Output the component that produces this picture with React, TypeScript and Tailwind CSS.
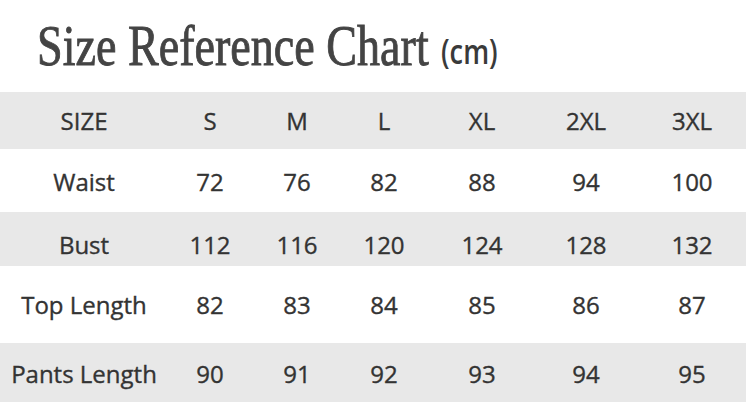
import React from 'react';

const sizes = ['S', 'M', 'L', 'XL', '2XL', '3XL'];

type Row = {
  label: string;
  values: (string | number)[];
  bg: string;
  height: string;
  shift: string;
};

const rows: Row[] = [
  { label: 'SIZE', values: sizes, bg: 'bg-[#e8e8e8]', height: 'h-[57px]', shift: 'pt-0' },
  { label: 'Waist', values: [72, 76, 82, 88, 94, 100], bg: 'bg-white', height: 'h-[63px]', shift: 'pt-[3px]' },
  { label: 'Bust', values: [112, 116, 120, 124, 128, 132], bg: 'bg-[#e8e8e8]', height: 'h-[54px]', shift: 'pt-[11px]' },
  { label: 'Top Length', values: [82, 83, 84, 85, 86, 87], bg: 'bg-white', height: 'h-[77px]', shift: 'pt-0' },
  { label: 'Pants Length', values: [90, 91, 92, 93, 94, 95], bg: 'bg-[#e8e8e8]', height: 'h-[59px]', shift: 'pt-[3px]' },
];

export default function App() {
  return (
    <div className="w-[750px] h-[411px] bg-white overflow-hidden text-[#333]">
      {/* Title */}
      <div className="h-[92px] flex items-end pl-[37px] pb-[17px]">
        <div className="w-[404px] whitespace-nowrap">
          <span className="inline-block origin-left scale-x-[0.795] font-['Liberation_Serif',serif] text-[58px] leading-none text-[#444] [-webkit-text-stroke:0.9px_#444]">
            Size Reference Chart
          </span>
        </div>
        <div className="w-[56px] whitespace-nowrap pb-[5px]">
          <span className="inline-block origin-left scale-x-[0.8] font-['Open_Sans',sans-serif] font-semibold text-[34px] leading-none text-[#3a3a3a]">
            (cm)
          </span>
        </div>
      </div>

      {/* Table */}
      <div className="font-['Open_Sans',sans-serif] text-[24px] [-webkit-text-stroke:0.35px_#333]">
        {rows.map((r) => (
          <div
            key={r.label}
            className={`grid grid-cols-[168px_84px_90px_84px_112px_96px_116px] items-center ${r.bg} ${r.height} ${r.shift} w-[746px]`}
          >
            <div className="text-center leading-none">{r.label}</div>
            {r.values.map((v, i) => (
              <div key={i} className="text-center leading-none">
                {v}
              </div>
            ))}
          </div>
        ))}
      </div>
    </div>
  );
}
